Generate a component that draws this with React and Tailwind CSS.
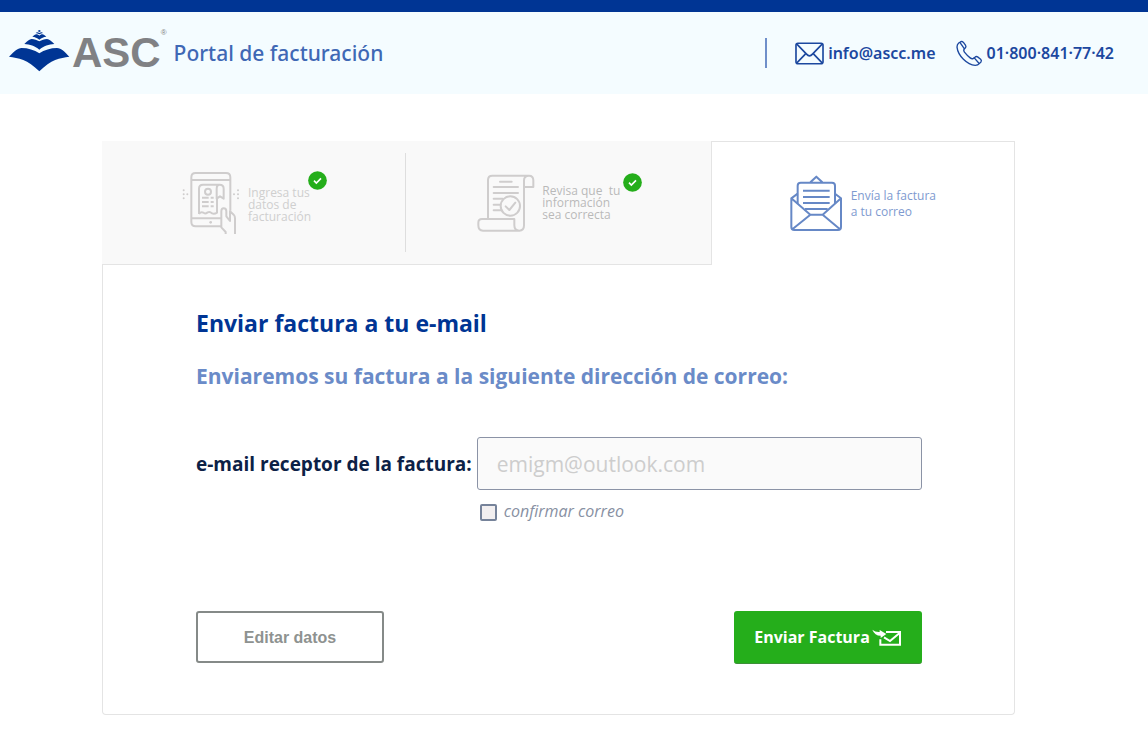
import React from "react";

function LogoMark() {
  return (
    <svg viewBox="24 24 186 129" className="h-[43px] w-[62px] shrink-0 self-start" fill="#003594" aria-hidden="true">
      <path d="M27 107 C42 93 52 81 65 81 C84 81 103 87 118 97 C133 87 152 81 171 81 C184 81 194 93 208 107 C180 111 153 115 118 151 C83 115 55 111 27 107Z" />
      <path d="M73 69 C82 61 88 54 95 54 C103 54 111 57 118 61 C125 57 133 54 141 54 C148 54 154 61 163 69 C146 71 132 74 118 86 C104 74 90 71 73 69Z" />
      <path d="M97 47 C102 43 105 40 109 40 C113 40 115 42 118 44 C121 42 123 40 127 40 C131 40 134 43 139 47 C131 48 125 50 118 56 C111 50 105 48 97 47Z" />
      <path d="M107 36 C110 34 112 33 118 36 C124 33 126 34 129 36 C125 37 121 38 118 40 C115 38 111 37 107 36Z" />
      <path d="M113 30 L118 27 L123 30 L118 33Z" />
    </svg>
  );
}

function MailIcon() {
  return (
    <svg viewBox="153 65 88 68" className="h-[23px] w-[29px] shrink-0" fill="none" stroke="#1c489f" strokeWidth="5" strokeLinejoin="round" aria-hidden="true">
      <rect x="156" y="68" width="82" height="62" rx="6" />
      <path d="M158 70 L188 101 Q197 111 206 101 L236 70 M158 128 L185 100 M236 128 L209 100" />
    </svg>
  );
}

function PhoneIcon() {
  return (
    <svg viewBox="640 60 80 80" className="h-[27px] w-[27px] shrink-0" fill="none" stroke="#1c489f" strokeWidth="4" strokeLinejoin="round" strokeLinecap="round" aria-hidden="true">
      <path d="M648 69 Q643 73 643 81 Q645 100 662 117 Q679 134 697 135 Q705 135 709 130 L714 125 Q717 121 713 117 L704 110 Q700 107 696 111 L691 115 Q687 117 682 113 Q672 105 665 96 Q661 90 665 86 L668 83 Q671 80 668 75 L662 67 Q658 63 654 65 Z" />
      <path d="M652 68 L664 85 M694 113 L708 129" />
    </svg>
  );
}

function TabletReceiptIcon() {
  return (
    <svg viewBox="258 108 180 192" className="h-[64px] w-[60px] shrink-0" fill="none" stroke="#cfcdcd" strokeWidth="6" strokeLinejoin="round" aria-hidden="true">
      <path d="M378 274 H302 Q289 274 289 261 V127 Q289 114 302 114 H393 Q406 114 406 127 V227" />
      <path d="M289 135 H406 M289 250 H378" />
      <path d="M312 237 V161 Q312 149 324 149 H374 Q386 149 386 161 V191 L375 184 L365 191 V161 Q365 149 374 149" />
      <path d="M312 237 Q318 229 325 233 Q330 238 338 232 Q345 229 351 235 Q358 238 366 233 V191" />
      <circle cx="339" cy="170" r="9" />
      <path d="M321 188 H341 M321 201 H341 M321 214 H341 M347 188 H356 M347 201 H356 M347 214 H356" />
      <path d="M392 297 V291 L379 277 V229 Q379 220 386 220 Q394 220 394 229 V244 L405 258 V229 L416 239 Q420 243 420 250 V297" />
      <g fill="#cfcdcd" stroke="none">
        <circle cx="347" cy="262" r="4" />
        <circle cx="266" cy="166" r="3" /><circle cx="266" cy="178" r="3" /><circle cx="266" cy="190" r="3" /><circle cx="277" cy="178" r="3" />
        <circle cx="429" cy="166" r="3" /><circle cx="429" cy="178" r="3" /><circle cx="429" cy="190" r="3" /><circle cx="417" cy="178" r="3" />
      </g>
    </svg>
  );
}

function ScrollCheckIcon() {
  return (
    <svg viewBox="228 119 174 174" className="size-[58px] shrink-0" fill="none" stroke="#cfcdcd" strokeWidth="6" strokeLinejoin="round" strokeLinecap="round" aria-hidden="true">
      <path d="M261 253 V137 Q261 124 274 124 H384 Q397 124 397 138 V158 H369 V138 Q369 124 384 124" />
      <path d="M369 158 V273 Q369 289 355 289 H246 Q232 289 232 273 V265 Q232 254 243 254 H340 V273 Q340 289 355 289" />
      <path d="M297 142 H332 M278 158 H351 M278 176 H351 M278 193 H305 M278 211 H298 M278 228 H302" />
      <circle cx="328" cy="215" r="29" />
      <path d="M314 216 L325 227 L343 205" />
    </svg>
  );
}

function OpenEnvelopeIcon() {
  return (
    <svg viewBox="270 117 159 171" className="h-[57px] w-[53px] shrink-0" fill="none" stroke="#6688c6" strokeWidth="6" strokeLinejoin="round" aria-hidden="true">
      <path d="M274 187 V273 Q274 282 283 282 H414 Q423 282 423 273 V187 L405 173 M293 173 L274 187 L331 236 H368 L423 187 M331 236 L277 280 M368 236 L420 280" />
      <path d="M293 203 V149 Q293 140 302 140 H396 Q405 140 405 149 V203 M331 139 L349 122 L367 139" />
      <path d="M309 164 H389 M309 183 H389 M309 201 H389 M315 219 H383" />
    </svg>
  );
}

function SendMailIcon() {
  return (
    <svg viewBox="460 84 90 51" className="h-[17px] w-[30px] shrink-0" fill="none" stroke="#fff" strokeWidth="6" aria-hidden="true">
      <path d="M502 93 H544 V131 H485 V115 M496 109 L514 120 L542 97" />
      <path d="M461 86 Q470 94 483 93 V87 L503 99 L486 111 V104 Q468 104 461 86Z" fill="#fff" stroke="none" />
    </svg>
  );
}

function DoneBadge({ className }) {
  return (
    <svg viewBox="0 0 57 57" className={className} role="img" aria-label="Completado">
      <circle cx="28.500" cy="28.500" r="28" fill="#25ae1b" />
      <path d="M18 29 L25 36 L39 22" fill="none" stroke="#fff" strokeWidth="5" />
    </svg>
  );
}

function Steps() {
  return (
    <ol className="grid grid-cols-3">
      <li className="relative flex h-[124px] items-center border-b border-[#e4e4e4] bg-[#f9f9f9] pl-[79px]">
        <TabletReceiptIcon />
        <span className="relative mt-1 ml-[7px] text-[12px] leading-[12px] text-[#cfcfcf]">
          Ingresa tus<br />datos de<br />facturación
          <DoneBadge className="absolute -top-4 left-[60px] size-[19px]" />
        </span>
        <span className="absolute top-3 right-0 bottom-3 w-px bg-[#dedede]" />
      </li>
      <li className="flex h-[124px] items-center border-b border-[#e4e4e4] bg-[#f9f9f9] pl-[71px]">
        <ScrollCheckIcon />
        <span className="relative ml-[7px] text-[12px] leading-[12px] whitespace-pre text-[#b9b9b9]">
          {"Revisa que  tu\ninformación\nsea correcta"}
          <DoneBadge className="absolute -top-3 left-[81px] size-[19px]" />
        </span>
      </li>
      <li aria-current="step" className="flex h-[124px] items-center border-t border-r border-l border-[#e4e4e4] bg-white pl-[78px]">
        <OpenEnvelopeIcon />
        <span className="ml-2 text-[12px] leading-[16px] text-[#7e9acf]">
          Envía la factura<br />a tu correo
        </span>
      </li>
    </ol>
  );
}

export default function App() {
  return (
    <div className="font-['Open_Sans',sans-serif]">
      <header className="flex items-center justify-between border-t-12 border-[#003594] bg-[#f4fcff] py-[17px] pr-[34px] pl-2">
        <div className="flex items-center">
          <LogoMark />
          <span className="ml-[2px] flex h-12 items-center font-['Liberation_Sans',sans-serif] text-[42px] leading-[48px] font-bold text-[#808184]">
            ASC<sup className="self-start text-[8px] leading-[16px] font-normal">®</sup>
          </span>
          <span className="ml-[7px] font-['Noto_Sans',sans-serif] text-[21px] leading-[28px] font-medium text-[#3f68b5]">Portal de facturación</span>
        </div>
        <address className="flex items-center font-['Noto_Sans',sans-serif] text-[16px] leading-[24px] font-semibold text-[#1c489f] not-italic">
          <span className="mr-7 h-[30px] w-[2px] bg-[#6f8fca]" />
          <a href="mailto:info@ascc.me" className="mr-5 flex items-center gap-1">
            <MailIcon />
            info@ascc.me
          </a>
          <a href="tel:018008417742" className="flex items-center gap-1">
            <PhoneIcon />
            01·800·841·77·42
          </a>
        </address>
      </header>

      <main className="mt-[47px] mr-[133px] mb-8 ml-[102px]">
        <Steps />
        <form className="rounded-b-sm border-r border-b border-l border-[#e4e4e4] bg-white pt-10 pr-[92px] pb-[50px] pl-[93px]" onSubmit={(e) => e.preventDefault()}>
          <h1 className="text-[23px] leading-[36px] font-bold text-[#003594]">Enviar factura a tu e-mail</h1>
          <h2 className="mt-[19px] text-[21px] leading-[32px] font-bold text-[#6a8bc8]">Enviaremos su factura a la siguiente dirección de correo:</h2>

          <div className="mt-[45px] grid grid-cols-[auto_1fr] items-center gap-x-[5px] gap-y-[9px]">
            <label htmlFor="email" className="text-[19px] leading-[28px] font-bold text-[#0c2146]">e-mail receptor de la factura:</label>
            <input
              id="email"
              type="email"
              placeholder="emigm@outlook.com"
              className="h-[53px] w-full min-w-0 rounded-[3px] border border-[#8b93a6] bg-[#fafafa] px-[19px] text-[21px] placeholder:text-[#cdcdcd]"
            />
            <label className="col-start-2 flex items-center gap-[7px] pl-[3px] text-[16px] leading-[24px] text-[#8790a2] italic">
              <input type="checkbox" className="mt-[2px] size-[17px] appearance-none rounded-[2px] border-2 border-[#76839a] bg-[#f2eff0] checked:bg-[#76839a]" />
              confirmar correo
            </label>
          </div>

          <div className="mt-[88px] flex items-start justify-between">
            <button type="button" className="h-[52px] w-[188px] rounded-[3px] border-2 border-[#858a88] bg-white pt-[2px] font-['Liberation_Sans',sans-serif] text-[16px] font-bold text-[#8e9290]">
              Editar datos
            </button>
            <button type="submit" className="flex h-[53px] w-[188px] items-center justify-center gap-[2px] rounded-[3px] border-b border-[#3d8f38] bg-[#25ae1b] text-[16px] font-bold text-white">
              Enviar Factura
              <SendMailIcon />
            </button>
          </div>
        </form>
      </main>
    </div>
  );
}
